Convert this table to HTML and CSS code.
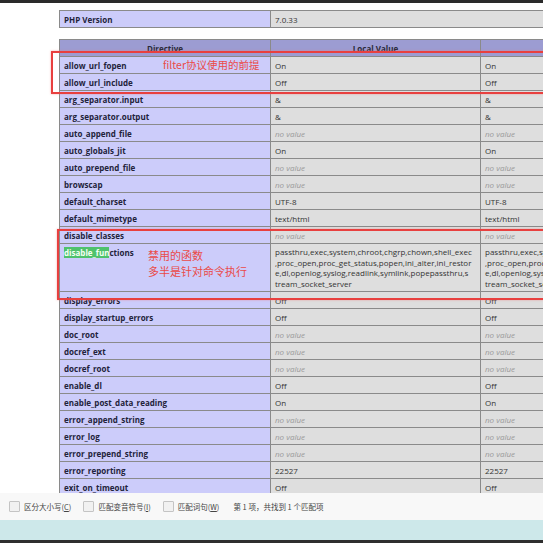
FILE: index.html
```html
<!DOCTYPE html>
<html lang="zh">
<head>
<meta charset="utf-8">
<title>phpinfo</title>
<link rel="stylesheet" href="styles.css">
</head>
<body>
<div class="topbar"></div>
<div class="page">
  <table class="tbl ver">
    <colgroup><col class="c1"><col class="c23"></colgroup>
    <tr><td class="e">PHP Version</td><td class="v">7.0.33</td></tr>
  </table>
  <table class="tbl cfg">
    <colgroup><col class="c1"><col class="c2"><col class="c3"></colgroup>
    <tr class="h"><th>Directive</th><th>Local Value</th><th>Master Value</th></tr>
    <tr><td class="e">allow_url_fopen</td><td class="v">On</td><td class="v">On</td></tr>
    <tr><td class="e">allow_url_include</td><td class="v">Off</td><td class="v">Off</td></tr>
    <tr><td class="e">arg_separator.input</td><td class="v">&amp;</td><td class="v">&amp;</td></tr>
    <tr><td class="e">arg_separator.output</td><td class="v">&amp;</td><td class="v">&amp;</td></tr>
    <tr><td class="e">auto_append_file</td><td class="v"><i class="nv">no value</i></td><td class="v"><i class="nv">no value</i></td></tr>
    <tr><td class="e">auto_globals_jit</td><td class="v">On</td><td class="v">On</td></tr>
    <tr><td class="e">auto_prepend_file</td><td class="v"><i class="nv">no value</i></td><td class="v"><i class="nv">no value</i></td></tr>
    <tr><td class="e">browscap</td><td class="v"><i class="nv">no value</i></td><td class="v"><i class="nv">no value</i></td></tr>
    <tr><td class="e">default_charset</td><td class="v">UTF-8</td><td class="v">UTF-8</td></tr>
    <tr><td class="e">default_mimetype</td><td class="v">text/html</td><td class="v">text/html</td></tr>
    <tr><td class="e">disable_classes</td><td class="v"><i class="nv">no value</i></td><td class="v"><i class="nv">no value</i></td></tr>
    <tr><td class="e"><span class="hl">disable_fun</span>ctions</td><td class="v multi">passthru,exec,system,chroot,chgrp,chown,shell_exec<br>,proc_open,proc_get_status,popen,ini_alter,ini_restor<br>e,dl,openlog,syslog,readlink,symlink,popepassthru,s<br>tream_socket_server</td><td class="v multi">passthru,exec,system,chroot,chgrp,chown,shell_exec<br>,proc_open,proc_get_status,popen,ini_alter,ini_restor<br>e,dl,openlog,syslog,readlink,symlink,popepassthru,s<br>tream_socket_server</td></tr>
    <tr><td class="e">display_errors</td><td class="v">Off</td><td class="v">Off</td></tr>
    <tr><td class="e">display_startup_errors</td><td class="v">Off</td><td class="v">Off</td></tr>
    <tr><td class="e">doc_root</td><td class="v"><i class="nv">no value</i></td><td class="v"><i class="nv">no value</i></td></tr>
    <tr><td class="e">docref_ext</td><td class="v"><i class="nv">no value</i></td><td class="v"><i class="nv">no value</i></td></tr>
    <tr><td class="e">docref_root</td><td class="v"><i class="nv">no value</i></td><td class="v"><i class="nv">no value</i></td></tr>
    <tr><td class="e">enable_dl</td><td class="v">Off</td><td class="v">Off</td></tr>
    <tr><td class="e">enable_post_data_reading</td><td class="v">On</td><td class="v">On</td></tr>
    <tr><td class="e">error_append_string</td><td class="v"><i class="nv">no value</i></td><td class="v"><i class="nv">no value</i></td></tr>
    <tr><td class="e">error_log</td><td class="v"><i class="nv">no value</i></td><td class="v"><i class="nv">no value</i></td></tr>
    <tr><td class="e">error_prepend_string</td><td class="v"><i class="nv">no value</i></td><td class="v"><i class="nv">no value</i></td></tr>
    <tr><td class="e">error_reporting</td><td class="v">22527</td><td class="v">22527</td></tr>
    <tr><td class="e">exit_on_timeout</td><td class="v">Off</td><td class="v">Off</td></tr>
    <tr><td class="e">expose_php</td><td class="v">On</td><td class="v">On</td></tr>
  </table>

  <div class="mark mark1"></div>
  <div class="note note1">filter协议使用的前提</div>
  <div class="mark mark2"></div>
  <div class="note note2">禁用的函数<br>多半是针对命令执行</div>
</div>
<div class="findbar">
  <label class="opt"><span class="box"></span><span class="lbl">区分大小写(<u>C</u>)</span></label>
  <label class="opt"><span class="box"></span><span class="lbl">匹配变音符号(<u>I</u>)</span></label>
  <label class="opt"><span class="box"></span><span class="lbl">匹配词句(<u>W</u>)</span></label>
  <span class="status">第 1 项，共找到 1 个匹配项</span>
</div>
<div class="cyan"></div>
<div class="bottombar"></div>
</body>
</html>
```
FILE: styles.css
```css
html, body {
  margin: 0;
  padding: 0;
}
body {
  width: 543px;
  height: 543px;
  overflow: hidden;
  background: #ffffff;
  font-family: "Open Sans", "Noto Sans CJK SC", sans-serif;
}
.topbar {
  height: 3px;
  background: #2a2a2a;
}
.page {
  position: relative;
  height: 490px;
  overflow: hidden;
  padding: 7px 0 0 59px;
  box-sizing: border-box;
}
.tbl {
  border-collapse: collapse;
  table-layout: fixed;
  width: 632px;
  font-size: 8px;
  color: #222;
}
.ver {
  margin-bottom: 11px;
}
.c1 { width: 211px; }
.c2 { width: 210px; }
.c3 { width: 211px; }
.c23 { width: 421px; }
.tbl td, .tbl th {
  border: 1px solid #8a8a8a;
  padding: 3px 4px 2px 4px;
  line-height: 11px;
  height: 11px;
  white-space: nowrap;
  overflow: hidden;
  text-align: left;
  vertical-align: top;
}
.tbl th {
  background: #9c9cd2;
  text-align: center;
  font-weight: 700;
  color: #2a2a3a;
}
.e {
  background: #ccccfa;
  font-weight: 700;
  color: #23233a;
}
.v {
  background: #dedede;
  color: #333;
}
.nv {
  color: #9a9a9a;
}
.tbl .multi {
  line-height: 10.5px;
}
.hl {
  background: #4fc26c;
  color: #f4fff4;
}
.mark {
  position: absolute;
  border: 2px solid #e8403f;
  border-right: none;
  box-shadow: 0 0 2px rgba(240, 120, 120, 0.6);
  right: -10px;
}
.mark1 {
  left: 51px;
  top: 48px;
  height: 39px;
}
.mark2 {
  left: 57px;
  top: 226px;
  height: 67px;
}
.note {
  position: absolute;
  color: #ea4a48;
  font-family: "Noto Sans CJK SC", sans-serif;
  font-size: 10.5px;
  line-height: 16px;
}
.note1 {
  left: 163px;
  top: 54px;
}
.note2 {
  left: 148px;
  top: 244px;
  font-size: 11px;
}
.findbar {
  height: 27px;
  background: #f8f8f8;
  display: flex;
  align-items: center;
  padding-left: 9px;
  font-family: "Noto Sans CJK SC", sans-serif;
  font-size: 7.5px;
  line-height: 11px;
  color: #444;
}
.opt {
  display: flex;
  align-items: center;
  margin-right: 12px;
}
.lbl {
  display: block;
}
.opt u {
  text-decoration: underline;
}
.box {
  width: 9px;
  height: 9px;
  border: 1px solid #c4c4c4;
  background: #f1f1f1;
  border-radius: 1px;
  margin-right: 4px;
  flex: none;
}
.status {
  margin-left: 2px;
}
.cyan {
  height: 20px;
  background: #cde8ea;
}
.bottombar {
  height: 3px;
  background: #2e2e2e;
}
```
